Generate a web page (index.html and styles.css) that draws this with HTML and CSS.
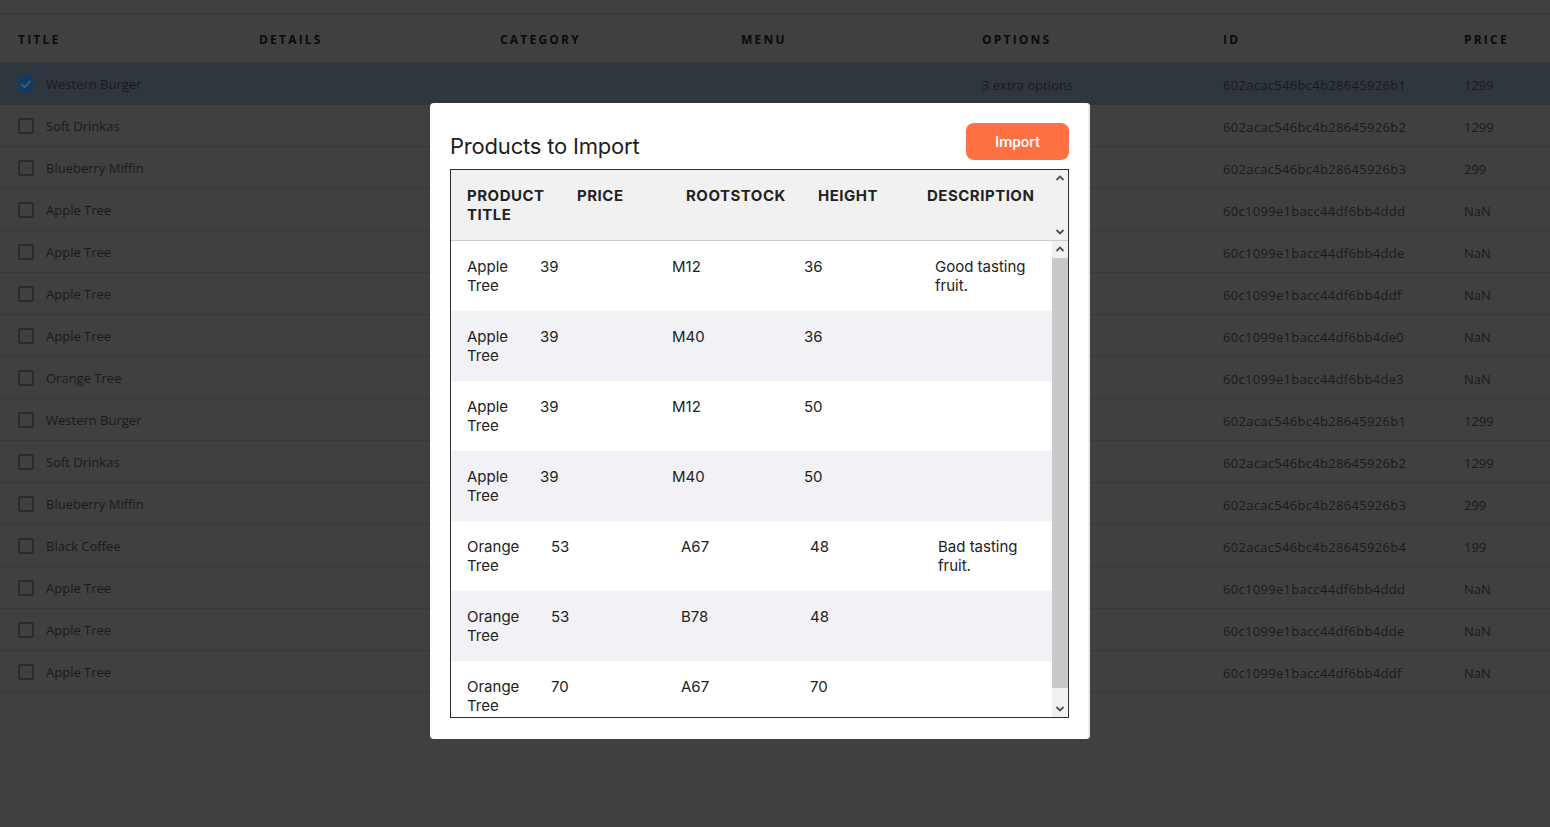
FILE: index.html
```html
<!DOCTYPE html>
<html lang="en">
<head>
<meta charset="utf-8">
<title>Products</title>
<link rel="stylesheet" href="styles.css">
</head>
<body>
<div class="topbar"></div>
<div class="grid">
  <div class="head">
    <div class="hc">Title</div><div class="hc">Details</div><div class="hc">Category</div><div class="hc">Menu</div><div class="hc">Options</div><div class="hc">ID</div><div class="hc">Price</div>
  </div>
  <div class="row selected"><div class="c title"><span class="cb checked"><svg viewBox="0 0 16 16" width="16" height="16"><path d="M3.5 8.2l3 3 6-6.2" fill="none" stroke="#56606c" stroke-width="1.6"/></svg></span>Western Burger</div><div class="c"></div><div class="c"></div><div class="c"></div><div class="c">3 extra options</div><div class="c id">602acac546bc4b28645926b1</div><div class="c">1299</div></div>
  <div class="row"><div class="c title"><span class="cb"></span>Soft Drinkas</div><div class="c"></div><div class="c"></div><div class="c"></div><div class="c"></div><div class="c id">602acac546bc4b28645926b2</div><div class="c">1299</div></div>
  <div class="row"><div class="c title"><span class="cb"></span>Blueberry Miffin</div><div class="c"></div><div class="c"></div><div class="c"></div><div class="c"></div><div class="c id">602acac546bc4b28645926b3</div><div class="c">299</div></div>
  <div class="row"><div class="c title"><span class="cb"></span>Apple Tree</div><div class="c"></div><div class="c"></div><div class="c"></div><div class="c"></div><div class="c id">60c1099e1bacc44df6bb4ddd</div><div class="c">NaN</div></div>
  <div class="row"><div class="c title"><span class="cb"></span>Apple Tree</div><div class="c"></div><div class="c"></div><div class="c"></div><div class="c"></div><div class="c id">60c1099e1bacc44df6bb4dde</div><div class="c">NaN</div></div>
  <div class="row"><div class="c title"><span class="cb"></span>Apple Tree</div><div class="c"></div><div class="c"></div><div class="c"></div><div class="c"></div><div class="c id">60c1099e1bacc44df6bb4ddf</div><div class="c">NaN</div></div>
  <div class="row"><div class="c title"><span class="cb"></span>Apple Tree</div><div class="c"></div><div class="c"></div><div class="c"></div><div class="c"></div><div class="c id">60c1099e1bacc44df6bb4de0</div><div class="c">NaN</div></div>
  <div class="row"><div class="c title"><span class="cb"></span>Orange Tree</div><div class="c"></div><div class="c"></div><div class="c"></div><div class="c"></div><div class="c id">60c1099e1bacc44df6bb4de3</div><div class="c">NaN</div></div>
  <div class="row"><div class="c title"><span class="cb"></span>Western Burger</div><div class="c"></div><div class="c"></div><div class="c"></div><div class="c"></div><div class="c id">602acac546bc4b28645926b1</div><div class="c">1299</div></div>
  <div class="row"><div class="c title"><span class="cb"></span>Soft Drinkas</div><div class="c"></div><div class="c"></div><div class="c"></div><div class="c"></div><div class="c id">602acac546bc4b28645926b2</div><div class="c">1299</div></div>
  <div class="row"><div class="c title"><span class="cb"></span>Blueberry Miffin</div><div class="c"></div><div class="c"></div><div class="c"></div><div class="c"></div><div class="c id">602acac546bc4b28645926b3</div><div class="c">299</div></div>
  <div class="row"><div class="c title"><span class="cb"></span>Black Coffee</div><div class="c"></div><div class="c"></div><div class="c"></div><div class="c"></div><div class="c id">602acac546bc4b28645926b4</div><div class="c">199</div></div>
  <div class="row"><div class="c title"><span class="cb"></span>Apple Tree</div><div class="c"></div><div class="c"></div><div class="c"></div><div class="c"></div><div class="c id">60c1099e1bacc44df6bb4ddd</div><div class="c">NaN</div></div>
  <div class="row"><div class="c title"><span class="cb"></span>Apple Tree</div><div class="c"></div><div class="c"></div><div class="c"></div><div class="c"></div><div class="c id">60c1099e1bacc44df6bb4dde</div><div class="c">NaN</div></div>
  <div class="row"><div class="c title"><span class="cb"></span>Apple Tree</div><div class="c"></div><div class="c"></div><div class="c"></div><div class="c"></div><div class="c id">60c1099e1bacc44df6bb4ddf</div><div class="c">NaN</div></div>
</div>

<div class="modal">
  <div class="modal-head">
    <h2 class="modal-title">Products to Import</h2>
    <button class="btn-import">Import</button>
  </div>
  <div class="box">
    <div class="box-head">
      <div class="ph-cols">
        <div class="ph">PRODUCT TITLE</div><div class="ph">PRICE</div><div class="ph">ROOTSTOCK</div><div class="ph">HEIGHT</div><div class="ph">DESCRIPTION</div>
      </div>
      <div class="sbar sbar-head">
        <span class="arr"><svg viewBox="0 0 16 16" width="16" height="16"><path d="M4.5 10l3.5-3.5 3.5 3.5" fill="none" stroke="#505050" stroke-width="1.8"/></svg></span>
        <span class="track-empty"></span>
        <span class="arr"><svg viewBox="0 0 16 16" width="16" height="16"><path d="M4.5 6l3.5 3.5 3.5-3.5" fill="none" stroke="#505050" stroke-width="1.8"/></svg></span>
      </div>
    </div>
    <div class="box-body">
      <div class="rows">
        <div class="pr apple"><div class="pc first">Apple Tree</div><div class="pc">39</div><div class="pc">M12</div><div class="pc">36</div><div class="pc">Good tasting fruit.</div></div>
        <div class="pr apple alt"><div class="pc first">Apple Tree</div><div class="pc">39</div><div class="pc">M40</div><div class="pc">36</div><div class="pc"></div></div>
        <div class="pr apple"><div class="pc first">Apple Tree</div><div class="pc">39</div><div class="pc">M12</div><div class="pc">50</div><div class="pc"></div></div>
        <div class="pr apple alt"><div class="pc first">Apple Tree</div><div class="pc">39</div><div class="pc">M40</div><div class="pc">50</div><div class="pc"></div></div>
        <div class="pr orange"><div class="pc first">Orange Tree</div><div class="pc">53</div><div class="pc">A67</div><div class="pc">48</div><div class="pc">Bad tasting fruit.</div></div>
        <div class="pr orange alt"><div class="pc first">Orange Tree</div><div class="pc">53</div><div class="pc">B78</div><div class="pc">48</div><div class="pc"></div></div>
        <div class="pr orange"><div class="pc first">Orange Tree</div><div class="pc">70</div><div class="pc">A67</div><div class="pc">70</div><div class="pc"></div></div>
      </div>
      <div class="sbar sbar-body">
        <span class="arr"><svg viewBox="0 0 16 16" width="16" height="16"><path d="M4.5 10l3.5-3.5 3.5 3.5" fill="none" stroke="#505050" stroke-width="1.8"/></svg></span>
        <span class="thumb"></span>
        <span class="track-rest"></span>
        <span class="arr"><svg viewBox="0 0 16 16" width="16" height="16"><path d="M4.5 6l3.5 3.5 3.5-3.5" fill="none" stroke="#505050" stroke-width="1.8"/></svg></span>
      </div>
    </div>
  </div>
</div>
</body>
</html>
```
FILE: styles.css
```css
* { box-sizing: border-box; }
html, body { margin: 0; padding: 0; }
body {
  width: 1550px;
  height: 827px;
  overflow: hidden;
  background: #404040;
  font-family: "Open Sans", "Liberation Sans", sans-serif;
  position: relative;
}
.topbar {
  height: 14px;
  border-bottom: 1px solid #333333;
}
.grid { width: 1550px; }
.head, .row {
  display: grid;
  grid-template-columns: repeat(6, 241px) 1fr;
}
.head {
  height: 49px;
  align-items: center;
  border-bottom: 1px solid #363636;
}
.hc {
  padding-left: 18px;
  font-size: 12px;
  font-weight: 700;
  letter-spacing: 2.2px;
  text-transform: uppercase;
  color: #0a0a0a;
  padding-top: 2px;
}
.row {
  height: 42px;
  align-items: center;
  border-bottom: 1px solid #383838;
  font-size: 13px;
  color: #1a1a1a;
}
.row.selected { background: #30363d; border-bottom-color: #30363d; }
.c {
  padding-left: 18px;
  white-space: nowrap;
  padding-top: 2px;
}
.c.id { letter-spacing: 0.3px; }
.c.title { display: flex; align-items: center; padding-top: 0; line-height: 18px; }
.cb {
  width: 16px;
  height: 16px;
  border: 2px solid #2b2b2b;
  border-radius: 2px;
  margin-right: 12px;
  flex: none;
  display: inline-flex;
}
.cb.checked {
  background: #0f3b64;
  border: none;
}

/* modal */
.modal {
  position: absolute;
  left: 430px;
  top: 103px;
  width: 660px;
  height: 636px;
  background: #ffffff;
  border-radius: 4px;
  padding: 20px 21px 21px 20px;
  box-shadow: inset -2px 0 0 #ececec;
  font-family: Inter, Roboto, "Liberation Sans", sans-serif;
  color: #222222;
  display: flex;
  flex-direction: column;
}
.modal-head {
  display: flex;
  justify-content: space-between;
  align-items: center;
  height: 37px;
  margin-bottom: 9px;
}
.modal-title {
  margin: 0;
  padding-top: 9px;
  font-size: 22px;
  font-weight: 400;
  color: #1e1e1e;
  letter-spacing: -0.2px;
}
.btn-import {
  width: 103px;
  height: 37px;
  border: none;
  border-radius: 8px;
  background: #ff7043;
  color: #ffffff;
  font-family: Roboto, Inter, "Liberation Sans", sans-serif;
  font-size: 15px;
  font-weight: 500;
  padding: 0;
}
.box {
  border: 1px solid #2e2e2e;
  height: 549px;
  display: flex;
  flex-direction: column;
  overflow: hidden;
}
.box-head {
  height: 71px;
  background: #f1f1f1;
  border-bottom: 1px solid #cccccc;
  display: flex;
  flex: none;
}
.ph-cols {
  flex: 1;
  display: grid;
  grid-template-columns: 110px 109px 132px 109px 1fr;
  padding-left: 16px;
  padding-top: 16px;
}
.ph {
  font-size: 15px;
  font-weight: 700;
  line-height: 19px;
  letter-spacing: 0.5px;
  color: #222222;
  padding-right: 10px;
}
.sbar {
  width: 16px;
  flex: none;
  display: flex;
  flex-direction: column;
  background: #f1f1f1;
}
.arr { height: 16px; display: flex; flex: none; }
.track-empty { flex: 1; }
.box-body {
  flex: 1;
  display: flex;
  min-height: 0;
}
.rows {
  flex: 1;
  overflow: hidden;
}
.pr {
  height: 70px;
  display: grid;
  padding-left: 16px;
  padding-top: 16px;
  background: #ffffff;
}
.pr.alt { background: #f2f2f6; }
.pr.apple { grid-template-columns: 73px 132px 132px 131px 1fr; }
.pr.orange { grid-template-columns: 84px 130px 129px 128px 1fr; }
.pc {
  font-size: 15px;
  line-height: 19px;
  color: #222222;
  padding-right: 10px;
}
.pc.first { padding-right: 8px; }
.pr .pc:last-child { padding-right: 14px; }
.thumb {
  height: 430px;
  background: #c9c9c9;
  margin: 1px 0 0;
  flex: none;
}
.track-rest { flex: 1; }
```
